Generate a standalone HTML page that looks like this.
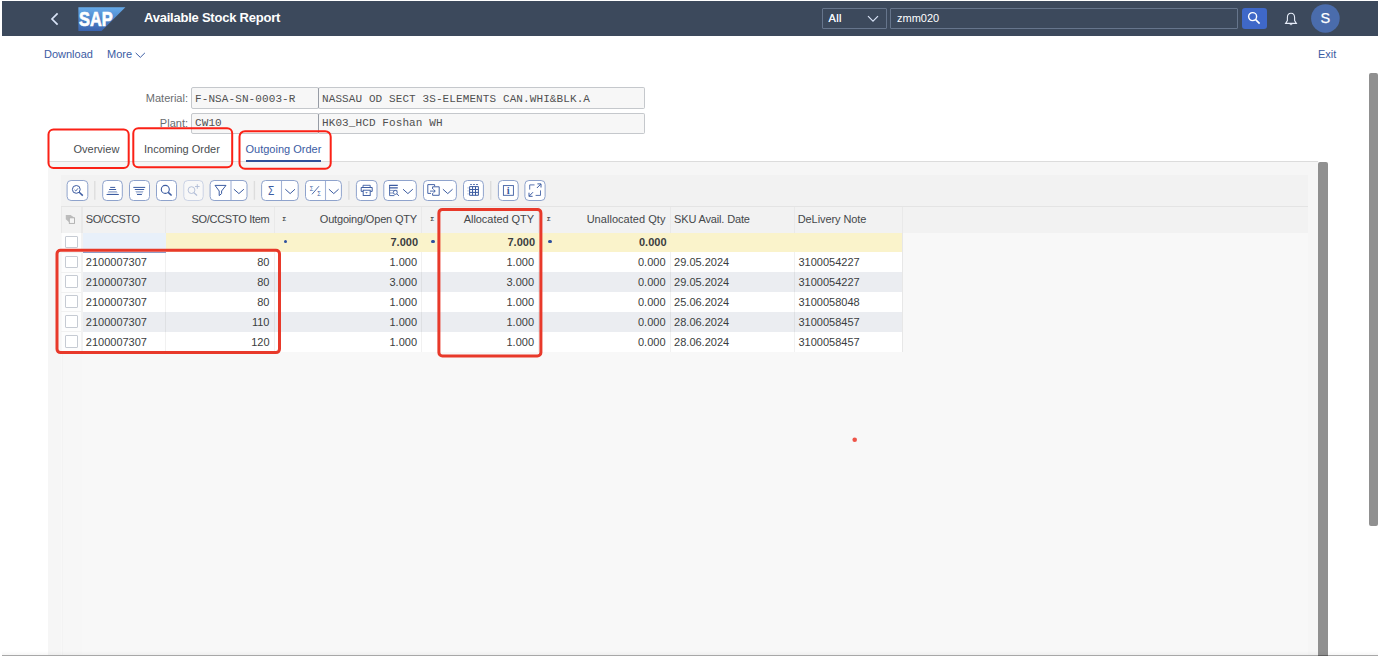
<!DOCTYPE html>
<html lang="en">
<head>
<meta charset="utf-8">
<title>Available Stock Report</title>
<style>
*{box-sizing:border-box;margin:0;padding:0}
html,body{width:1387px;height:658px;overflow:hidden;background:#fff}
body{position:relative;font-family:"Liberation Sans",sans-serif;font-size:11px;color:#32363a}
.abs{position:absolute}
#shell{left:2px;top:1px;width:1376px;height:35px;background:#3c495c}
#title{left:142px;top:-1.5px;height:35px;line-height:35px;font-size:13px;letter-spacing:-0.23px;font-weight:bold;color:#fff;white-space:nowrap}
.hbox{border:1px solid #66758c;border-radius:1px;top:7px;height:21px}
#hsel{left:820px;width:65px;color:#eef2f8;font-size:11px;letter-spacing:0.3px;line-height:19px;padding-left:5.5px;text-shadow:0 0 0.4px #fff}
#hinp{left:888px;width:348px;color:#fff;font-size:11px;line-height:19px;padding-left:6px}
#hsearch{left:1239.5px;top:7px;width:25.5px;height:21px;background:#3f68c8;border-radius:3px}
#avatar{left:1309.4px;top:3.3px;width:28px;height:28px;color:#fff;font-size:14.5px;line-height:28px;text-align:center;-webkit-text-stroke:0.25px #fff}
.lnk{color:#3b5ca3;font-size:11px;white-space:nowrap;line-height:14px}
.lbl{color:#6a6d70;font-size:11px;text-align:right;white-space:nowrap;line-height:21px}
.inp{border:1px solid #c5c8cc;border-radius:2px;background:#f7f7f7;height:21px;line-height:19px;font-family:"Liberation Mono",monospace;font-size:11px;color:#505050;padding-left:3px;white-space:nowrap;letter-spacing:0.1px}
.tab{font-size:11px;color:#4a4d50;white-space:nowrap;line-height:14px;top:142px}
#panel{left:48px;top:161px;width:1270px;height:494px;background:#f6f6f6;border-top:1px solid #dcdcdc}
#inner{left:61px;top:175px;width:1247px;height:480px;background:#f8f8f8}
#tbar{left:61px;top:175px;width:1247px;height:32px;background:#f2f2f2;border-bottom:1px solid #e4e4e4}
#thead{left:61px;top:207px;width:1247px;height:26px;background:#f2f2f2}
.hc{top:207px;height:26px;line-height:25px;font-size:11px;color:#45484b;white-space:nowrap;border-right:1px solid #e9e9e9;padding:0 4px}
.r{text-align:right}
.row{left:81px;width:822px;height:20px}
.c{top:0;height:20px;line-height:20px;font-size:11px;color:#3a3d40;white-space:nowrap;padding:0 4px;border-right:1px solid rgba(0,0,0,0.055)}
.cb{left:65px;width:12.5px;height:12.5px;background:#fff;border:1px solid #c6cbd3;border-radius:1px}
.sig{top:214.3px;font-size:6px;font-weight:bold;color:#45484b;line-height:10px}
.dot{top:7.2px;width:3.8px;height:3.8px;margin-left:-0.2px;border-radius:50%;background:#2d4f9e}
.b{font-weight:bold}
.c1,#hc1{padding-left:4.8px}
.c6,#hc6{padding-left:3.6px}
#hc7{padding-left:3.2px}
</style>
</head>
<body>
<!-- shell header -->
<div id="shell" class="abs">
  <svg class="abs" style="left:48px;top:10.5px" width="10" height="14" viewBox="0 0 10 14"><path d="M7.6 1.4 L2 7 L7.6 12.6" fill="none" stroke="#d9e3f7" stroke-width="1.7"/></svg>
  <svg class="abs" style="left:76px;top:6px" width="48" height="24" viewBox="0 0 48 24">
    <defs><linearGradient id="sg" x1="0" y1="0" x2="0" y2="1"><stop offset="0" stop-color="#66abea"/><stop offset="1" stop-color="#3a63ad"/></linearGradient></defs>
    <path d="M0.4 0.2 H47.4 L23.6 24 H0.4 Z" fill="url(#sg)"/>
    <text x="1.1" y="18.7" font-family="Liberation Sans, sans-serif" font-weight="bold" font-size="19.5" fill="#fff" stroke="#fff" stroke-width="0.7" textLength="33.6" lengthAdjust="spacingAndGlyphs">SAP</text>
  </svg>
  <div id="title" class="abs">Available Stock Report</div>
  <div id="hsel" class="abs hbox">All
    <svg class="abs" style="left:44px;top:6px" width="12" height="8" viewBox="0 0 12 8"><path d="M1 1.2 L6 6.2 L11 1.2" fill="none" stroke="#d9e3f7" stroke-width="1.2"/></svg>
  </div>
  <div id="hinp" class="abs hbox">zmm020</div>
  <div id="hsearch" class="abs">
    <svg class="abs" style="left:5.2px;top:3.1px" width="14" height="14" viewBox="0 0 14 14"><circle cx="5.6" cy="5.6" r="4" fill="none" stroke="#fff" stroke-width="1.4"/><path d="M8.6 8.6 L12.6 12.6" stroke="#fff" stroke-width="1.6"/></svg>
  </div>
  <svg class="abs" style="left:1282px;top:10.5px" width="14" height="15" viewBox="0 0 14 15"><path d="M7 1.2 C4.4 1.2 3.4 3.2 3.4 5.4 V8.6 L1.6 11.4 H12.4 L10.6 8.6 V5.4 C10.6 3.2 9.6 1.2 7 1.2 Z" fill="none" stroke="#e6ecf8" stroke-width="1.1"/><path d="M5.4 12.2 Q7 14.4 8.6 12.2 Z" fill="#e6ecf8"/></svg>
  <svg class="abs" style="left:1305px;top:0" width="40" height="35" viewBox="1307 1 40 35"><circle cx="1325.4" cy="18.45" r="14.3" fill="#4a6cac"/></svg>
  <div id="avatar" class="abs">S</div>
</div>

<!-- action bar -->
<div class="abs lnk" style="left:44px;top:47px">Download</div>
<div class="abs lnk" style="left:107px;top:47px">More</div>
<svg class="abs" style="left:135px;top:52.3px" width="11" height="7" viewBox="0 0 11 7"><path d="M0.7 0.9 L5.3 5.4 L9.9 0.9" fill="none" stroke="#3b5ca3" stroke-width="1"/></svg>
<div class="abs lnk" style="left:1318px;top:47px">Exit</div>

<!-- outer scrollbar -->
<div class="abs" style="left:1369px;top:73px;width:9px;height:453px;background:#909090;border-radius:2px"></div>

<!-- form -->
<div class="abs lbl" style="left:100px;top:87.5px;width:88px">Material:</div>
<div class="abs inp" style="left:191px;top:87px;width:128px;height:22px;line-height:22px">F-NSA-SN-0003-R</div>
<div class="abs inp" style="left:318px;top:87px;width:327px;height:22px;line-height:22px;border-left-color:#979ca5">NASSAU OD SECT 3S-ELEMENTS CAN.WHI&amp;BLK.A</div>
<div class="abs lbl" style="left:100px;top:113px;width:88px">Plant:</div>
<div class="abs inp" style="left:191px;top:113px;width:128px">CW10</div>
<div class="abs inp" style="left:318px;top:113px;width:327px;border-left-color:#979ca5">HK03_HCD Foshan WH</div>

<!-- panel -->
<div id="panel" class="abs"></div>
<div id="inner" class="abs"></div>
<div class="abs" style="left:61.5px;top:352px;width:20.5px;height:303px;background:#f7f7f7;border-left:1px solid #f3f3f3"></div>
<div id="tbar" class="abs"></div>
<div id="thead" class="abs"></div>
<div class="abs" style="left:1318px;top:162px;width:9.5px;height:494px;background:#909090;border-radius:2px 2px 0 0"></div>

<!-- tabs -->
<div class="abs tab" style="left:73.5px">Overview</div>
<div class="abs tab" style="left:144px">Incoming Order</div>
<div class="abs tab" style="left:245.5px;color:#3b5ca3">Outgoing Order</div>
<div class="abs" style="left:245.5px;top:160px;width:75.5px;height:2px;background:#2f4f99"></div>

<!--TB_START-->
<!-- toolbar -->
<svg class="abs" style="left:61px;top:175px" width="500" height="32" viewBox="61 175 500 32" fill="none" stroke-linecap="butt">
<rect x="67.10" y="180.5" width="20.70" height="20" rx="4" fill="#fff" stroke="#8fa3cc" stroke-width="1"/>
<circle cx="76.3" cy="189.4" r="3.9" stroke="#3c5ca1" stroke-width="1"/><path d="M79.2 192.3 L82.8 195.6" stroke="#3c5ca1" stroke-width="1.5"/><path d="M74.6 189.9 L75.8 191 L78 188.3" stroke="#3c5ca1" stroke-width="0.9"/>
<path d="M94.8 181 V199.7" stroke="#dddddd" stroke-width="1.4"/>
<rect x="102.70" y="180.5" width="19.60" height="20" rx="4" fill="#fff" stroke="#8fa3cc" stroke-width="1"/>
<path d="M110.2 187.4 H115.2 M109.1 189.5 H116.1 M106.6 194.5 H118.8" stroke="#3c5ca1" stroke-width="1"/><path d="M108.2 191.5 H116.9 M107.6 192.8 H117.5" stroke="#3c5ca1" stroke-width="0.8" opacity="0.55"/>
<rect x="129.50" y="180.5" width="20.00" height="20" rx="4" fill="#fff" stroke="#8fa3cc" stroke-width="1"/>
<path d="M133.3 187.4 H145.2 M134.8 189.5 H144.2 M137 194.5 H141.9" stroke="#3c5ca1" stroke-width="1"/><path d="M135.6 191.5 H143.3 M136 192.8 H142.9" stroke="#3c5ca1" stroke-width="0.8" opacity="0.55"/>
<rect x="156.50" y="180.5" width="20.00" height="20" rx="4" fill="#fff" stroke="#8fa3cc" stroke-width="1"/>
<circle cx="165.3" cy="189.4" r="4" stroke="#3c5ca1" stroke-width="1.1"/><path d="M168.2 192.4 L171.6 195.5" stroke="#3c5ca1" stroke-width="1.6"/>
<rect x="183.80" y="180.5" width="19.40" height="20" rx="4" fill="#f8f8f8" stroke="#cbd3e5" stroke-width="1"/>
<g opacity="0.38"><circle cx="191.5" cy="190.1" r="3.4" stroke="#3c5ca1" stroke-width="0.9"/><path d="M193.9 192.6 L197 195.5" stroke="#3c5ca1" stroke-width="1.2"/><path d="M197.3 184.2 V188.8 M195 186.5 H199.6" stroke="#3c5ca1" stroke-width="0.9"/></g>
<rect x="210.10" y="180.5" width="36.90" height="20" rx="4" fill="#fff" stroke="#8fa3cc" stroke-width="1"/>
<path d="M231 181 V200" stroke="#a3b3d6" stroke-width="1.1"/>
<path d="M215 185.4 H226 L221.6 191 V193.6 L219.2 195.6 V191 Z" stroke="#3c5ca1" stroke-width="1" stroke-linejoin="round"/>
<path d="M233.9 189.2 L238.9 193.6 L243.9 189.2" stroke="#3c5ca1" stroke-width="1"/>
<path d="M254.4 181 V199.7" stroke="#dddddd" stroke-width="1.4"/>
<rect x="261.60" y="180.5" width="36.60" height="20" rx="4" fill="#fff" stroke="#8fa3cc" stroke-width="1"/>
<path d="M281.5 181 V200" stroke="#a3b3d6" stroke-width="1.1"/>
<text x="268" y="195.1" font-family="Liberation Sans, sans-serif" font-size="12.6" textLength="6.3" lengthAdjust="spacingAndGlyphs" fill="#3c5ca1" stroke="none">Σ</text>
<path d="M285.3 189.2 L290.15 193.6 L295 189.2" stroke="#3c5ca1" stroke-width="1"/>
<rect x="305.50" y="180.5" width="35.90" height="20" rx="4" fill="#fff" stroke="#8fa3cc" stroke-width="1"/>
<path d="M325.5 181 V200" stroke="#a3b3d6" stroke-width="1.1"/>
<text x="309.8" y="190.5" font-family="Liberation Sans, sans-serif" font-size="8" textLength="3.6" lengthAdjust="spacingAndGlyphs" fill="#3c5ca1" stroke="none">Σ</text><text x="317.3" y="196.4" font-family="Liberation Sans, sans-serif" font-size="8" textLength="3.6" lengthAdjust="spacingAndGlyphs" fill="#3c5ca1" stroke="none">Σ</text><path d="M312 194.3 L319 186.2" stroke="#3c5ca1" stroke-width="0.9"/>
<path d="M328.9 189.2 L333.75 193.6 L338.6 189.2" stroke="#3c5ca1" stroke-width="1"/>
<path d="M348.9 181 V199.7" stroke="#dddddd" stroke-width="1.4"/>
<rect x="356.40" y="180.5" width="20.60" height="20" rx="4" fill="#fff" stroke="#8fa3cc" stroke-width="1"/>
<path d="M363 187.4 V185.3 H370.2 V187.4" stroke="#3c5ca1" stroke-width="0.9"/><path d="M363 191.4 H361.2 V187.5 H372.2 V191.4 H370.4" stroke="#3c5ca1" stroke-width="1"/><rect x="363.2" y="190.2" width="7" height="5.3" stroke="#3c5ca1" stroke-width="0.95"/><path d="M365.2 192.3 H367.8 L366.5 193.5 Z" fill="#3c5ca1" stroke="none"/>
<rect x="383.80" y="180.5" width="32.50" height="20" rx="4" fill="#fff" stroke="#8fa3cc" stroke-width="1"/>
<path d="M389.2 185.4 H397.8 M389.2 187.9 H397.8" stroke="#3c5ca1" stroke-width="1.1"/><path d="M389.6 185 V195.6 H394.4" stroke="#3c5ca1" stroke-width="0.9"/><path d="M389.6 190.4 H397.4 M389.6 193 H393" stroke="#3c5ca1" stroke-width="0.8" opacity="0.8"/><circle cx="395.3" cy="192.4" r="2" fill="#fff" stroke="#3c5ca1" stroke-width="0.9"/><path d="M396.8 193.9 L399 195.9" stroke="#3c5ca1" stroke-width="0.9"/>
<path d="M403 189.2 L407.9 193.6 L412.8 189.2" stroke="#3c5ca1" stroke-width="1"/>
<rect x="423.50" y="180.5" width="32.90" height="20" rx="4" fill="#fff" stroke="#8fa3cc" stroke-width="1"/>
<path d="M434.6 186.2 V184.6 H427.8 V193.4 H431" stroke="#3c5ca1" stroke-width="0.95" stroke-linejoin="round"/><path d="M432.6 189 V186.8 H439.2 V195.3 H432.6 V193.2" stroke="#3c5ca1" stroke-width="0.95" stroke-linejoin="round"/><path d="M430 191.1 H435" stroke="#3c5ca1" stroke-width="0.9"/><path d="M433.4 189.4 L435.3 191.1 L433.4 192.8" stroke="#3c5ca1" stroke-width="0.9"/>
<path d="M442.9 189.2 L447.75 193.6 L452.6 189.2" stroke="#3c5ca1" stroke-width="1"/>
<rect x="463.50" y="180.5" width="19.90" height="20" rx="4" fill="#fff" stroke="#8fa3cc" stroke-width="1"/>
<path d="M469.6 186.6 H478.4 V195.3 H469.6 Z M472.55 186.6 V195.3 M475.5 186.6 V195.3 M469.6 189.5 H478.4 M469.6 192.4 H478.4" stroke="#3c5ca1" stroke-width="1"/><path d="M470.2 184.5 H471.9 M473.1 184.5 H474.9 M476.1 184.5 H477.9" stroke="#3c5ca1" stroke-width="0.9"/><path d="M467.3 187.9 H468.8 M467.3 190.9 H468.8 M467.3 193.9 H468.8" stroke="#3c5ca1" stroke-width="0.8" opacity="0.5"/>
<path d="M490.7 181 V199.7" stroke="#dddddd" stroke-width="1.4"/>
<rect x="498.40" y="180.5" width="19.80" height="20" rx="4" fill="#fff" stroke="#8fa3cc" stroke-width="1"/>
<rect x="503.4" y="185.6" width="10" height="9.7" stroke="#3c5ca1" stroke-width="0.9"/><text x="506.7" y="194" font-family="Liberation Serif, serif" font-weight="bold" font-size="10.5" fill="#3c5ca1" stroke="none">i</text>
<rect x="524.90" y="180.5" width="20.20" height="20" rx="4" fill="#fff" stroke="#8fa3cc" stroke-width="1"/>
<path d="M529.7 189.6 V184.9 H534.5 M540.5 190.4 V195.4 H535.6" stroke="#3c5ca1" stroke-width="1" opacity="0.85"/><path d="M536.9 188 L540.9 184 M537.4 183.9 H541 V187.5 M533 192.2 L529.1 196.2 M529 192.7 V196.3 H532.6" stroke="#3c5ca1" stroke-width="1"/>
</svg>
<!--TB_END-->
<!--TABLE_START-->
<!-- table header -->
<div class="abs" style="left:61px;top:207px;width:21.5px;height:26px;border-right:2px solid #e9e9e9;border-left:1px solid #e8e8e8"></div>
<svg class="abs" style="left:64px;top:213px" width="13" height="13" viewBox="64 213 13 13"><path d="M65.8 215 H70.6 L74.5 217.7 H69.2 V222.2 L65.8 219.2 Z" fill="#bcbcbc"/><rect x="69.3" y="217.8" width="5.2" height="5.6" fill="#f5f5f5" stroke="#adadad" stroke-width="0.9"/></svg>
<div class="abs hc" id="hc1" style="left:81px;width:85px;letter-spacing:-0.44px"><span>SO/CCSTO</span></div>
<div class="abs hc r" id="hc2" style="left:166px;width:108.5px;letter-spacing:-0.28px"><span>SO/CCSTO Item</span></div>
<div class="abs hc r" id="hc3" style="left:274.5px;width:147.5px;letter-spacing:-0.18px"><span>Outgoing/Open QTY</span></div>
<div class="abs hc r" id="hc4" style="left:422px;width:117px;letter-spacing:-0.05px"><span>Allocated QTY</span></div>
<div class="abs hc r" id="hc5" style="left:539px;width:131.5px;letter-spacing:0.04px"><span>Unallocated Qty</span></div>
<div class="abs hc" id="hc6" style="left:670.5px;width:124.0px;letter-spacing:-0.16px"><span>SKU Avail. Date</span></div>
<div class="abs hc" id="hc7" style="left:794.5px;width:108.5px;letter-spacing:-0.08px"><span>DeLivery Note</span></div>
<div class="abs sig" style="left:282.5px">Σ</div>
<div class="abs sig" style="left:430.5px">Σ</div>
<div class="abs sig" style="left:547px">Σ</div>
<!-- selector column -->
<div class="abs" style="left:61.5px;top:233px;width:19px;height:119px;background:#fdfdfd"></div>
<div class="abs" style="left:61px;top:251.70000000000002px;width:19.5px;height:1px;background:#f1f1f1"></div>
<div class="abs" style="left:61px;top:271.6px;width:19.5px;height:1px;background:#f1f1f1"></div>
<div class="abs" style="left:61px;top:291.5px;width:19.5px;height:1px;background:#f1f1f1"></div>
<div class="abs" style="left:61px;top:311.4px;width:19.5px;height:1px;background:#f1f1f1"></div>
<div class="abs" style="left:61px;top:331.3px;width:19.5px;height:1px;background:#f1f1f1"></div>
<div class="abs cb" style="top:235.60000000000002px"></div>
<div class="abs cb" style="top:255.50000000000003px"></div>
<div class="abs cb" style="top:275.40000000000003px"></div>
<div class="abs cb" style="top:295.3px"></div>
<div class="abs cb" style="top:315.2px"></div>
<div class="abs cb" style="top:335.1px"></div>
<!-- total row -->
<div class="abs" style="left:81px;top:232.5px;width:85px;height:20px;background:#e8f0fa"></div>
<div class="abs row" style="left:166px;width:737px;top:232.5px;background:#faf3cb">
<div class="abs dot" style="left:117.7px"></div>
<div class="abs c r b" style="left:108.5px;width:147.5px;border:0;line-height:18px"><span>7.000</span></div>
<div class="abs dot" style="left:265.2px"></div>
<div class="abs c r b" style="left:256px;width:117px;border:0;line-height:18px"><span>7.000</span></div>
<div class="abs dot" style="left:382.2px"></div>
<div class="abs c r b" style="left:373px;width:131.5px;border:0;line-height:18px"><span>0.000</span></div>
</div>
<!-- data rows -->
<div class="abs row" style="top:252.0px;background:#fff">
<div class="abs c c1" style="left:0px;width:85px"><span>2100007307</span></div>
<div class="abs c r c2" style="left:85px;width:108.5px"><span>80</span></div>
<div class="abs c r c3" style="left:193.5px;width:147.5px"><span>1.000</span></div>
<div class="abs c r c4" style="left:341px;width:117px"><span>1.000</span></div>
<div class="abs c r c5" style="left:458px;width:131.5px"><span>0.000</span></div>
<div class="abs c c6" style="left:589.5px;width:124.0px"><span>29.05.2024</span></div>
<div class="abs c c7" style="left:713.5px;width:108.5px"><span>3100054227</span></div>
</div>
<div class="abs row" style="top:271.9px;background:#ebedf1">
<div class="abs c c1" style="left:0px;width:85px"><span>2100007307</span></div>
<div class="abs c r c2" style="left:85px;width:108.5px"><span>80</span></div>
<div class="abs c r c3" style="left:193.5px;width:147.5px"><span>3.000</span></div>
<div class="abs c r c4" style="left:341px;width:117px"><span>3.000</span></div>
<div class="abs c r c5" style="left:458px;width:131.5px"><span>0.000</span></div>
<div class="abs c c6" style="left:589.5px;width:124.0px"><span>29.05.2024</span></div>
<div class="abs c c7" style="left:713.5px;width:108.5px"><span>3100054227</span></div>
</div>
<div class="abs row" style="top:291.8px;background:#fff">
<div class="abs c c1" style="left:0px;width:85px"><span>2100007307</span></div>
<div class="abs c r c2" style="left:85px;width:108.5px"><span>80</span></div>
<div class="abs c r c3" style="left:193.5px;width:147.5px"><span>1.000</span></div>
<div class="abs c r c4" style="left:341px;width:117px"><span>1.000</span></div>
<div class="abs c r c5" style="left:458px;width:131.5px"><span>0.000</span></div>
<div class="abs c c6" style="left:589.5px;width:124.0px"><span>25.06.2024</span></div>
<div class="abs c c7" style="left:713.5px;width:108.5px"><span>3100058048</span></div>
</div>
<div class="abs row" style="top:311.7px;background:#ebedf1">
<div class="abs c c1" style="left:0px;width:85px"><span>2100007307</span></div>
<div class="abs c r c2" style="left:85px;width:108.5px"><span>110</span></div>
<div class="abs c r c3" style="left:193.5px;width:147.5px"><span>1.000</span></div>
<div class="abs c r c4" style="left:341px;width:117px"><span>1.000</span></div>
<div class="abs c r c5" style="left:458px;width:131.5px"><span>0.000</span></div>
<div class="abs c c6" style="left:589.5px;width:124.0px"><span>28.06.2024</span></div>
<div class="abs c c7" style="left:713.5px;width:108.5px"><span>3100058457</span></div>
</div>
<div class="abs row" style="top:331.6px;background:#fff">
<div class="abs c c1" style="left:0px;width:85px"><span>2100007307</span></div>
<div class="abs c r c2" style="left:85px;width:108.5px"><span>120</span></div>
<div class="abs c r c3" style="left:193.5px;width:147.5px"><span>1.000</span></div>
<div class="abs c r c4" style="left:341px;width:117px"><span>1.000</span></div>
<div class="abs c r c5" style="left:458px;width:131.5px"><span>0.000</span></div>
<div class="abs c c6" style="left:589.5px;width:124.0px"><span>28.06.2024</span></div>
<div class="abs c c7" style="left:713.5px;width:108.5px"><span>3100058457</span></div>
</div>
<div class="abs" style="left:80.5px;top:233px;width:2.2px;height:119px;background:#f2f2f2"></div>
<div class="abs" style="left:902px;top:233px;width:1px;height:119px;background:#e7e7e7"></div>
<div class="abs" style="left:82.5px;top:252px;width:83.5px;height:1px;background:#8f9cc6"></div>
<!--TABLE_END-->
<!-- annotations -->
<svg class="abs" style="left:0;top:0;pointer-events:none" width="1387" height="658" viewBox="0 0 1387 658">
<rect x="48.50" y="129.40" width="80.20" height="38.60" rx="5" fill="none" stroke="#fb2116" stroke-width="2"/>
<rect x="133.30" y="128.30" width="98.90" height="39.00" rx="5" fill="none" stroke="#fb2116" stroke-width="2"/>
<rect x="239.50" y="131.20" width="91.20" height="37.50" rx="5.5" fill="none" stroke="#fb2116" stroke-width="2"/>
<rect x="57.00" y="250.20" width="222.50" height="102.40" rx="3.5" fill="none" stroke="#e8392a" stroke-width="3"/>
<rect x="438.90" y="209.40" width="102.00" height="146.50" rx="3.5" fill="none" stroke="#e8392a" stroke-width="3"/>
<circle cx="854.7" cy="439.7" r="2.3" fill="#ee5448"/>
</svg>

<!-- bottom line -->
<div class="abs" style="left:2px;top:650.5px;width:1376px;height:4px;background:linear-gradient(rgba(0,0,0,0),rgba(0,0,0,0.035))"></div>
<div class="abs" style="left:2px;top:654.5px;width:1376px;height:1.5px;background:rgba(0,0,0,0.34)"></div>
</body>
</html>
